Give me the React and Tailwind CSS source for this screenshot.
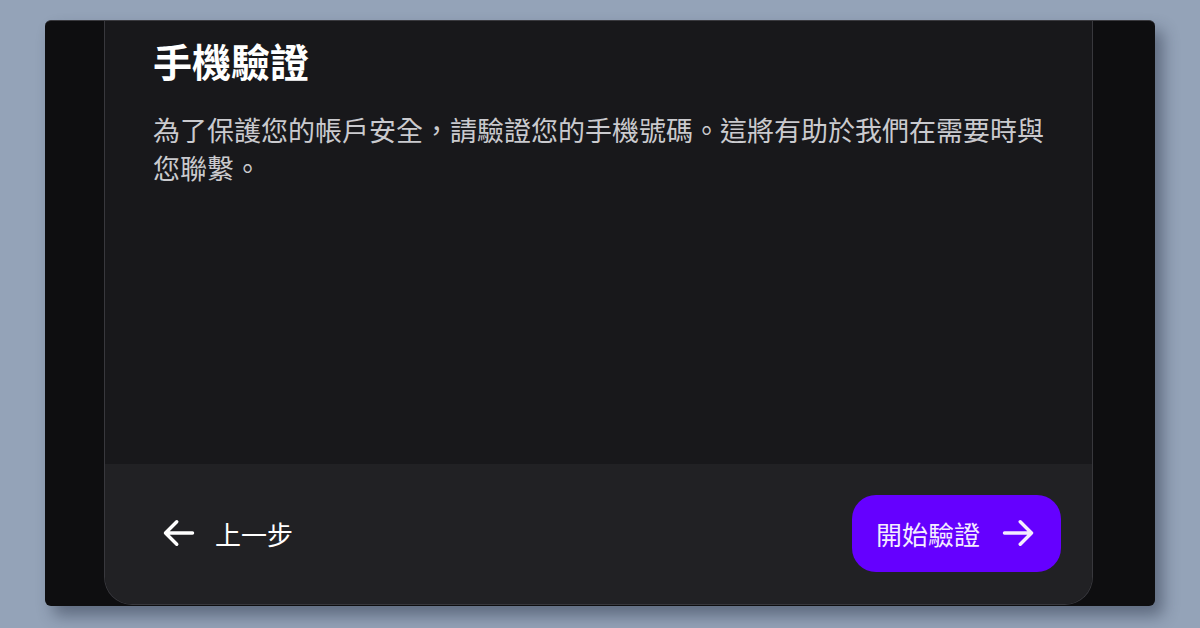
import React from "react";

const ArrowLeft = ({ className }) => (
  <svg viewBox="0 0 24 24" fill="none" stroke="currentColor" strokeWidth={2.3} strokeLinecap="round" strokeLinejoin="round" className={className}>
    <path d="M10.5 19.5 3 12m0 0 7.5-7.5M3 12h18" />
  </svg>
);

const ArrowRight = ({ className }) => (
  <svg viewBox="0 0 24 24" fill="none" stroke="currentColor" strokeWidth={2.3} strokeLinecap="round" strokeLinejoin="round" className={className}>
    <path d="M13.5 4.5 21 12m0 0-7.5 7.5M21 12H3" />
  </svg>
);

const App = () => {
  return (
    <div
      className="w-[1200px] h-[628px] bg-[#94a3b8] pt-[20px] pl-[45px] overflow-hidden"
      style={{ fontFamily: '"Noto Sans CJK TC", "Noto Sans", sans-serif' }}
    >
      {/* outer modal frame */}
      <div className="w-[1110px] h-[586px] bg-[#0e0e10] rounded-md border-t border-[#3a3a3f] overflow-hidden shadow-[8px_10px_16px_rgba(30,41,59,0.45)]">
        <div className="ml-[59px] w-[989px] h-[584px] flex flex-col bg-[#18181b] border-x border-b border-[#38383d] rounded-b-[28px] overflow-hidden">
          <div className="flex-1 pt-[16px] px-[48px]">
            <h1 className="text-[39px] leading-[46px] font-bold text-white">手機驗證</h1>
            <p className="mt-[28px] text-[27px] leading-[38px] text-[#cacace]">
              為了保護您的帳戶安全，請驗證您的手機號碼。這將有助於我們在需要時與您聯繫。
            </p>
          </div>

          <div className="h-[140px] bg-[#212124] flex items-center justify-between pl-[56px] pr-[31px] pb-[2px]">
            <button className="flex items-center gap-[18px] text-white text-[26px]">
              <ArrowLeft className="w-[36px] h-[36px]" />
              上一步
            </button>
            <button className="h-[77px] flex items-center gap-[20px] pl-[24px] pr-[25px] rounded-[24px] bg-[#6500ff] text-[#f4ecff] text-[26px]">
              開始驗證
              <ArrowRight className="w-[36px] h-[36px]" />
            </button>
          </div>
        </div>
      </div>
    </div>
  );
};

export default App;
